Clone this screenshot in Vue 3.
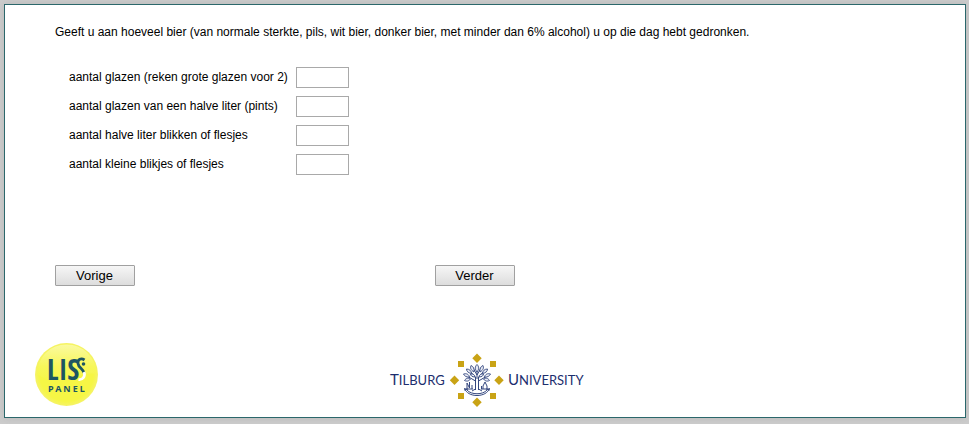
<script setup>
import { ref } from 'vue'

const questions = ref([
  { id: 'glazen', label: 'aantal glazen (reken grote glazen voor 2)', value: '' },
  { id: 'pints', label: 'aantal glazen van een halve liter (pints)', value: '' },
  { id: 'halve-liter', label: 'aantal halve liter blikken of flesjes', value: '' },
  { id: 'klein', label: 'aantal kleine blikjes of flesjes', value: '' },
])
</script>

<template>
  <main class="panel">
    <form class="survey" @submit.prevent>
      <p class="intro">Geeft u aan hoeveel bier (van normale sterkte, pils, wit bier, donker bier, met minder dan 6% alcohol) u op die dag hebt gedronken.</p>
      <div class="fields">
        <template v-for="q in questions" :key="q.id">
          <label :for="q.id">{{ q.label }}</label>
          <input :id="q.id" v-model="q.value" type="text" />
        </template>
      </div>
      <div class="actions">
        <button type="button">Vorige</button>
        <button type="submit">Verder</button>
      </div>
    </form>
    <footer class="logos">
      <svg class="liss" width="64" height="64" viewBox="0 0 64 64" role="img" aria-label="LISS Panel">
        <defs>
          <linearGradient id="shine" x1="0" y1="0" x2="0" y2="1">
            <stop offset="0" stop-color="#fafaa0" />
            <stop offset=".6" stop-color="#f7f75a" />
            <stop offset="1" stop-color="#f6f648" />
          </linearGradient>
          <radialGradient id="ball" cx=".5" cy=".5" r=".5">
            <stop offset=".85" stop-color="#f6f645" />
            <stop offset="1" stop-color="#f5f368" />
          </radialGradient>
        </defs>
        <circle cx="31.5" cy="31.5" r="31.5" fill="url(#ball)" />
        <path d="M2 31C3 13 16 1.500 31.500 1.500C48 1.500 61 14 61.500 31C48 28 39 37 25 38C14 38 8 35 2 31Z" fill="url(#shine)" />
        <text class="liss-name" x="12" y="37">LIS</text>
        <path d="M49.500 17C46 14.500 42.500 16.500 43 20.500C43.500 25 48.500 26 49 30" fill="none" stroke="#1d5662" stroke-width="2.800" />
        <circle cx="48.500" cy="21" r="1.800" fill="#1d5662" />
        <path d="M49 29C50.500 33 48 37 43.500 36.500" fill="none" stroke="#fff" stroke-width="2.800" />
        <text class="liss-panel" x="13" y="49">PANEL</text>
      </svg>
      <svg class="tilburg" width="200" height="56" viewBox="0 0 200 56" role="img" aria-label="Tilburg University">
        <text class="uni" x="5" y="33">T<tspan class="small">ILBURG</tspan></text>
        <text class="uni" x="123" y="33">U<tspan class="small">NIVERSITY</tspan></text>
        <g fill="#c9a315">
          <path d="M92 1.500l4.700 4.700-4.700 4.700-4.700-4.700zM92 45.500l4.700 4.700-4.700 4.700-4.700-4.700zM69.500 23.500l4.700 4.700-4.700 4.700-4.700-4.700zM114 23.500l4.700 4.700-4.700 4.700-4.700-4.700z" />
          <path d="M73 9h6v6h-6zM105 9h6v6h-6zM73 41h6v6h-6zM105 41h6v6h-6z" />
        </g>
        <g fill="none" stroke="#34477f" stroke-width="1">
          <path d="M90.500 38V25M93.500 38V25M92 27V17M90.500 29L82 24M93.500 29L102 24M91 26L85 19M93 26L99 19M92 23L88 16M92 23L96 16M87 39l3.500-2M97 39l-3.500-2" />
          <path d="M79.500 36C82 46 102 46 104.500 36M82 38C86 43 98 43 102 38M79 38l4-1M105 38l-4-1" />
          <path d="M82 37v-6l2.500 5v-6M102 37v-3l-2-4-2 4v3M80 37h8M96 37h8M87 33v4M96.500 34v3" />
        </g>
        <g fill="#e8ebf5" stroke="#34477f" stroke-width=".9">
          <path d="M92 20C89.500 17 90 14.500 92 12.500C94 14.500 94.500 17 92 20Z" />
          <path d="M89 20C85.500 18 85 15.500 86 13.500C88.500 14.500 89.500 17 89 20ZM95 20C98.500 18 99 15.500 98 13.500C95.500 14.500 94.500 17 95 20Z" />
          <path d="M86.500 21.500C83 21 81.500 19 81.500 17C84.500 17 86.500 19 86.500 21.500ZM97.500 21.500C101 21 102.500 19 102.500 17C99.500 17 97.500 19 97.500 21.500Z" />
          <path d="M84.500 25C81.500 25.500 79.500 24 78.500 22C81.500 21 84 22.500 84.500 25ZM99.500 25C102.500 25.500 104.500 24 105.500 22C102.500 21 100 22.500 99.500 25Z" />
          <path d="M85.500 27C83.500 29.500 81.500 29.500 79.500 28.500C81 26 83.500 25.500 85.500 27ZM98.500 27C100.500 29.500 102.500 29.500 104.500 28.500C103 26 100.500 25.500 98.500 27Z" />
          <path d="M90 25C87 25 85.500 23.500 85.500 22C88 21.500 90 23 90 25ZM94 25C97 25 98.500 23.500 98.500 22C96 21.500 94 23 94 25Z" />
        </g>
      </svg>
    </footer>
  </main>
</template>

<style>
body {
  background: #ccc;
}
</style>

<style scoped>
.panel {
  margin: 4px 3px 6px 4px;
  border: 1px solid #2b676b;
  background: #fff;
  box-shadow: 0 0 8px #b8b8b8;
  font: 12px/14px "Liberation Sans", Arial, sans-serif;
  color: #000;
}
.survey {
  padding: 20px 50px 0;
}
.intro {
  margin: 0;
}
.fields {
  display: grid;
  grid-template-columns: max-content 53px;
  gap: 8px;
  align-items: center;
  padding: 28px 14px 0;
}
.fields label {
  padding-bottom: 2px;
}
.fields input {
  box-sizing: border-box;
  width: 100%;
  height: 21px;
  padding: 1px 3px;
  border: 1px solid #a9a9a9;
  background: #fff;
  font: inherit;
}
.actions {
  display: flex;
  gap: 300px;
  padding-top: 90px;
}
.actions button {
  box-sizing: border-box;
  width: 80px;
  height: 21px;
  padding: 0 1px 0 0;
  border: 1px solid #a0a0a0;
  border-radius: 1px;
  background: linear-gradient(#f6f6f6, #dddddd);
  font: 13px/15px "Liberation Sans", Arial, sans-serif;
  color: #000;
}
.logos {
  display: grid;
  grid-template-columns: 1fr auto 1fr;
  align-items: center;
  padding: 56px 30px 9px;
}
.logos svg {
  display: block;
}
.tilburg {
  margin-top: 10px;
}
.liss-name {
  font: bold 29px/1 "Open Sans Condensed", "Liberation Sans Narrow", "Liberation Sans", sans-serif;
  fill: #1d5662;
}
.liss-panel {
  font: bold 9px/1 "Noto Sans", sans-serif;
  letter-spacing: 2px;
  fill: #1d5662;
}
.uni {
  font: 15px Lato, sans-serif;
  fill: #1c2e6e;
}
.small {
  font-size: 13px;
}
</style>
